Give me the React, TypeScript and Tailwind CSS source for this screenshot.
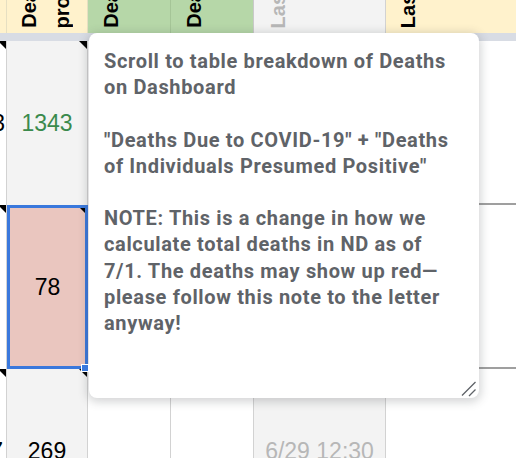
const Tri = () => (
  <div className="absolute top-0 right-0 w-[8px] h-[8px] bg-black [clip-path:polygon(0_0,100%_0,100%_100%)]" />
)

function HeadText({ lines, color = "text-black" }: { lines: string[]; color?: string }) {
  return (
    <div className={`flex items-end h-full gap-[13px] ${color}`}>
      {lines.map(l => (
        <span key={l} className="[writing-mode:vertical-rl] rotate-180 whitespace-nowrap font-bold text-[20px] leading-[20px]">
          {l}
        </span>
      ))}
    </div>
  )
}

export default function App() {
  const vline = "border-r border-[#d2d2d2]"
  return (
    <div className="relative w-[516px] h-[458px] overflow-hidden bg-white font-['Liberation_Sans',Arial,sans-serif]">
      <div className="grid grid-cols-[7px_81px_83px_83px_132px_130px] grid-rows-[33px_8px_164px_164px_164px]">
        {/* header */}
        <div className="bg-[#fff2cc] border-r border-[#e6dfc2]" />
        <div className="bg-[#fff2cc] border-r border-[#e6dfc2] overflow-hidden pl-[12px] pb-[5px]">
          <HeadText lines={["Deaths", "probable"]} />
        </div>
        <div className="bg-[#b6d7a8] border-r border-[#a5c597] overflow-hidden pl-[13px] pb-[5px]">
          <HeadText lines={["Deaths"]} />
        </div>
        <div className="bg-[#b6d7a8] border-r border-[#c9c9c9] overflow-hidden pl-[13px] pb-[5px]">
          <HeadText lines={["Deaths"]} />
        </div>
        <div className="bg-[#f3f3f3] border-r border-[#d2d2d2] overflow-hidden pl-[14px] pb-[5px]">
          <HeadText lines={["Last updated"]} color="text-[#b7b7b7]" />
        </div>
        <div className="bg-[#fff2cc] overflow-hidden pl-[12px] pb-[5px]">
          <HeadText lines={["Last"]} />
        </div>

        {/* frozen divider */}
        <div className="col-span-6 bg-[#d8dce4]" />

        {/* row 1 */}
        <div className={`relative flex items-center justify-end overflow-hidden ${vline} text-[23px] pr-[1px]`}>
          <span className="whitespace-nowrap">3</span>
          <Tri />
        </div>
        <div className={`relative flex items-center justify-center bg-[#f3f3f3] ${vline} text-[23px] text-[#3a8a4c]`}>
          1343
          <Tri />
        </div>
        <div className={vline} />
        <div className={vline} />
        <div className={`bg-[#f3f3f3] ${vline}`} />
        <div className="border-b-2 border-[#9f9f9f]" />

        {/* row 2 */}
        <div className={`relative ${vline}`}>
          <Tri />
        </div>
        <div className="relative flex items-center justify-center bg-[#eac6bf] border-[3px] border-[#3a78dc] text-[23px] text-black">
          78
          <div className="absolute top-0 right-0 w-[5px] h-[5px] bg-black [clip-path:polygon(0_0,100%_0,100%_100%)]" />
          <div className="absolute right-[-4px] bottom-[-6px] w-[8px] h-[8px] bg-[#3a78dc] border border-white z-10" />
        </div>
        <div className={vline} />
        <div className={vline} />
        <div className={`bg-[#f3f3f3] ${vline}`} />
        <div className="border-b-2 border-[#9f9f9f]" />

        {/* row 3 */}
        <div className={`relative flex items-center justify-end overflow-hidden ${vline} text-[23px] pr-[3px]`}>
          <span className="whitespace-nowrap">7</span>
          <Tri />
        </div>
        <div className={`relative flex items-center justify-center bg-[#f3f3f3] ${vline} text-[23px] text-black`}>
          269
          <Tri />
        </div>
        <div className={vline} />
        <div className={vline} />
        <div className={`flex items-center justify-center bg-[#f3f3f3] ${vline} text-[23px] text-[#b7b7b7]`}>
          6/29 12:30
        </div>
        <div />
      </div>

      {/* note editor */}
      <div className="absolute left-[89px] top-[33px] w-[390px] h-[365px] bg-white rounded-[8px] shadow-[0_2px_10px_2px_rgba(60,64,67,0.22)] pl-[15px] pt-[15px] font-['Roboto',sans-serif] font-bold text-[20px] tracking-[0.65px] leading-[26.2px] text-[#5f6368]">
        <p>
          Scroll to table breakdown of Deaths
          <br />
          on Dashboard
        </p>
        <p className="mt-[26.2px]">
          "Deaths Due to COVID-19" + "Deaths
          <br />
          of Individuals Presumed Positive"
        </p>
        <p className="mt-[26.2px]">
          NOTE: This is a change in how we
          <br />
          calculate total deaths in ND as of
          <br />
          7/1. The deaths may show up red—
          <br />
          please follow this note to the letter
          <br />
          anyway!
        </p>
        <svg className="absolute right-[2px] bottom-[1px]" width="16" height="16" viewBox="0 0 16 16">
          <path d="M14.5 1 L1 14.5 M14.5 8.5 L8 15" stroke="#5f6368" strokeWidth="1.3" fill="none" />
        </svg>
      </div>
    </div>
  )
}
